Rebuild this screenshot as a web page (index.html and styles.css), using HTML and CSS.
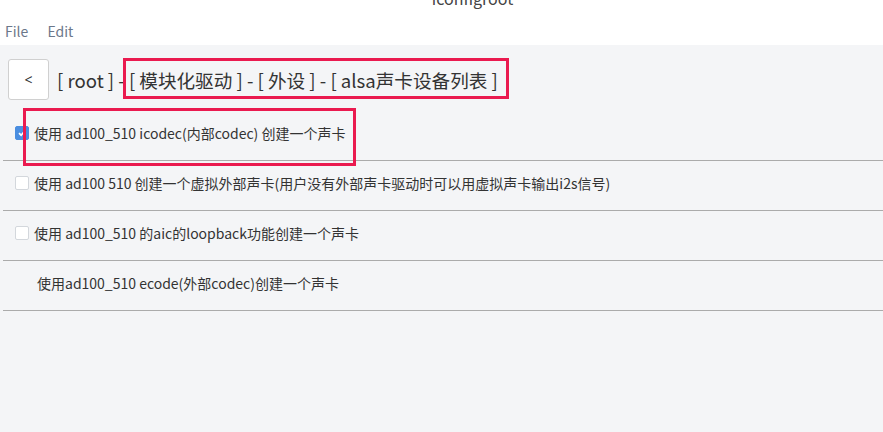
FILE: index.html
```html
<!DOCTYPE html>
<html lang="zh-CN">
<head>
    <meta charset="UTF-8">
    <title>iconfigroot</title>
    <link rel="stylesheet" href="styles.css">
</head>
<body>
<div class="top">
    <div class="title">iconfigroot</div>
    <div class="menu">
        <span>File</span>
        <span>Edit</span>
    </div>
</div>
<div class="main">
    <div class="crumb">
        <button class="back">&lt;</button>
        <span class="path">[ root ] - [ 模块化驱动 ] - [ 外设 ] - [ alsa声卡设备列表 ]</span>
    </div>
    <ul class="list">
        <li><span class="chk on"><svg width="10" height="10" viewBox="0 0 10 10"><path d="M2 5.2 L4.1 7.2 L8 2.8" fill="none" stroke="#fff" stroke-width="1.7"/></svg></span>使用 ad100_510 icodec(内部codec) 创建一个声卡</li>
        <li><span class="chk"></span>使用 ad100 510 创建一个虚拟外部声卡(用户没有外部声卡驱动时可以用虚拟声卡输出i2s信号)</li>
        <li><span class="chk"></span>使用 ad100_510 的aic的loopback功能创建一个声卡</li>
        <li class="plain">使用ad100_510 ecode(外部codec)创建一个声卡</li>
    </ul>
</div>
<!-- 标注框 -->
<div class="mark mark1"></div>
<div class="mark mark2"></div>
</body>
</html>
```

FILE: styles.css
```css
*{ margin: 0; padding: 0; box-sizing: border-box;}
html,body{ height: 100%;}
body{ font-family: "Noto Sans CJK SC", "Noto Sans", sans-serif; color: #333; background: #f4f5f7; position: relative; overflow: hidden;}

.top{ height: 45px; background: #fff; overflow: hidden;}
.title{ text-align: center; font-size: 16px; line-height: 20px; height: 8px; margin-top: -12px; padding-left: 62px; color: #444;}
.menu{ font-size: 14px; line-height: 20px; padding: 25px 0 0 5px; color: #6b778a;}
.menu span{ margin-right: 16px;}

.main{ padding-top: 14px;}
.crumb{ display: flex; align-items: center; height: 41px; padding-left: 8px;}
.back{ width: 41px; height: 41px; background: #fff; border: 1px solid #d0d0d0; border-radius: 3px; font: 14px "Noto Sans", sans-serif; color: #333;}
.path{ margin-left: 8px; font-size: 18.6px; color: #333;}

.list{ list-style: none; margin: 11px 0 0 3px;}
.list li{ display: flex; align-items: center; height: 50px; padding: 0 0 6px 12px; font-size: 14px; border-bottom: 1px solid #ababab;}
.list li.plain{ padding-left: 34px;}
.chk{ display: inline-flex; align-items: center; justify-content: center; width: 14px; height: 14px; margin-right: 5px; border: 1px solid #d3d7dc; border-radius: 2px; background: #fff;}
.chk.on{ background: #4a8ee0; border-color: #4a8ee0;}

.mark{ position: absolute; border: 3px solid #ea1a4f;}
.mark1{ left: 123px; top: 58px; width: 386px; height: 41px;}
.mark2{ left: 23px; top: 108px; width: 333px; height: 58px;}
```
